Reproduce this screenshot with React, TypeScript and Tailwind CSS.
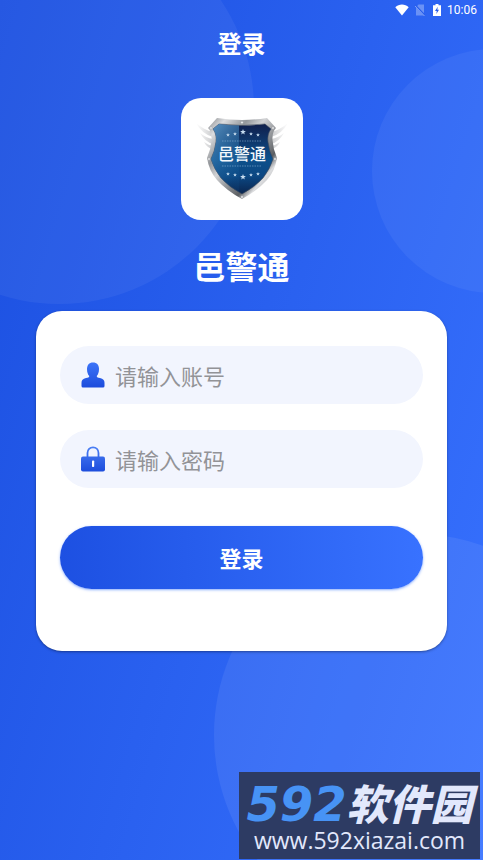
import { useState } from "react";

const STARS = [
  { x: 47, y: 17, s: 2 },
  { x: 54, y: 16, s: 2 },
  { x: 62, y: 14, s: 3 },
  { x: 70, y: 16, s: 2 },
  { x: 77, y: 17, s: 2 },
];

const STAR_POINTS = "0,-1 0.26,-0.34 0.95,-0.31 0.4,0.13 0.59,0.81 0,0.42 -0.59,0.81 -0.4,0.13 -0.95,-0.31 -0.26,-0.34";

const SHIELD_OUTER =
  "M36 0 Q61 4 86 0 L95 10 Q91 14 91.5 22 Q92 31 96 40 Q94 53 86 62 Q76 73 61 81 Q46 73 36 62 Q28 53 26 40 Q30 31 30.5 22 Q31 14 27 10 Z";
const SHIELD_INNER =
  "M38 6 Q61 9 84 6 L90 11 Q86 16 87 24 Q88 33 92 41 Q89 51 82 60 Q74 69 61 76 Q48 69 40 60 Q33 51 30 41 Q34 33 35 24 Q36 16 32 11 Z";

const WING = "M15 25 Q23 32 32 34 V39 Q21 36 15 25 Z M19 35 Q25 40 32 41 V46 Q24 44 19 35 Z M23 44 Q27 47 32 48 V51 Q26 50 23 44 Z";

function StatusBar() {
  return (
    <div className="flex h-5 items-center justify-end px-1.5 text-white">
      <svg className="h-3 w-3.5" viewBox="0 0 14 12" fill="currentColor">
        <path d="M0.3 3.2 C4 -0.3 10 -0.3 13.7 3.2 L7 11.6 Z" />
      </svg>
      <svg className="ml-1.5 h-3 w-2.5 opacity-40" viewBox="0 0 10 12">
        <path d="M3.5 0.5 H9 V11.5 H1 V3.5 Z" fill="currentColor" opacity="0.75" />
        <path d="M0 1 L10 11.5" stroke="#2459e8" strokeWidth="1.8" />
        <path d="M0 2 L9.5 12" stroke="currentColor" strokeWidth="1" />
      </svg>
      <svg className="ml-2 h-3 w-2" viewBox="0 0 8 12">
        <path d="M2.5 0 H5.5 V1.2 H8 V12 H0 V1.2 H2.5 Z" fill="currentColor" />
        <path d="M4.8 2.8 L2 7 H3.8 L3.3 10 L6 5.8 H4.3 Z" fill="#2459e8" />
      </svg>
      <span className="ml-1.5 font-[Roboto,sans-serif] text-xs">10:06</span>
    </div>
  );
}

function ShieldLogo() {
  return (
    <svg className="h-[122px] w-[122px]" viewBox="0 0 122 122" role="img" aria-label="邑警通">
      <defs>
        <linearGradient id="steel" x1="0" y1="0" x2="1" y2="1">
          <stop offset="0" stopColor="#7d8084" />
          <stop offset="0.14" stopColor="#dcdddf" />
          <stop offset="0.3" stopColor="#94979b" />
          <stop offset="0.42" stopColor="#d2d3d5" />
          <stop offset="0.55" stopColor="#96999d" />
          <stop offset="0.7" stopColor="#5c5f63" />
          <stop offset="0.78" stopColor="#dcdddf" />
          <stop offset="1" stopColor="#85888c" />
        </linearGradient>
        <linearGradient id="field" x1="0" y1="0" x2="0" y2="1">
          <stop offset="0" stopColor="#101f4c" />
          <stop offset="0.5" stopColor="#0d508b" />
          <stop offset="0.75" stopColor="#0c4782" />
          <stop offset="1" stopColor="#0a254f" />
        </linearGradient>
        <linearGradient id="shine" x1="0" y1="0" x2="0.4" y2="1">
          <stop offset="0" stopColor="#5f9bca" stopOpacity="0.95" />
          <stop offset="1" stopColor="#1664a3" stopOpacity="0.1" />
        </linearGradient>
        <linearGradient id="wing" x1="0" y1="0" x2="1" y2="0">
          <stop offset="0" stopColor="#ffffff" />
          <stop offset="1" stopColor="#cbccce" />
        </linearGradient>
        <clipPath id="fieldClip">
          <path d={SHIELD_INNER} />
        </clipPath>
      </defs>
      <g fill="url(#wing)">
        <path d={WING} />
        <path d={WING} transform="matrix(-1 0 0 1 122 0)" />
      </g>
      <g transform="translate(0 20)">
        <path d={SHIELD_OUTER} fill="url(#steel)" />
        <path d={SHIELD_INNER} fill="url(#field)" stroke="#3e4a5c" strokeWidth="0.6" />
        <path d="M30 6 H58 V76 H30 Z" fill="url(#shine)" clipPath="url(#fieldClip)" />
        <g fill="#c6dcef">
          {STARS.map((star) => (
            <g key={star.x}>
              <polygon points={STAR_POINTS} transform={`translate(${star.x} ${star.y}) scale(${star.s})`} />
              <polygon points={STAR_POINTS} transform={`translate(${star.x} ${73 - star.y}) scale(${star.s})`} />
            </g>
          ))}
        </g>
        <path d="M41 23 H81 M41 48 H81" stroke="#8ab4d6" strokeWidth="0.6" strokeDasharray="1.5 1" />
        <g fill="#f2f3f4" stroke="#8b8e93" strokeWidth="0.4">
          <circle cx="61" cy="4.5" r="1.2" />
          <circle cx="30" cy="10" r="1.2" />
          <circle cx="92" cy="10" r="1.2" />
          <circle cx="28" cy="41" r="1.2" />
          <circle cx="94" cy="41" r="1.2" />
          <circle cx="61" cy="79" r="1.2" />
        </g>
        <text
          x="61"
          y="42"
          textAnchor="middle"
          fill="#f4f8fc"
          className="font-['Noto_Sans_CJK_SC',sans-serif] text-[16px] font-medium"
        >
          邑警通
        </text>
      </g>
    </svg>
  );
}

function UserIcon() {
  return (
    <svg className="h-[26px] w-6 shrink-0" viewBox="0 0 24 26">
      <defs>
        <linearGradient id="userFill" x1="0" y1="0" x2="0" y2="1">
          <stop offset="0" stopColor="#3c74f8" />
          <stop offset="1" stopColor="#1c4cdc" />
        </linearGradient>
      </defs>
      <path
        d="M12 0.5 C8 0.5 6 3.2 6 7 C6 10.5 7 12.8 8.3 14 C8.3 15.4 7 15.7 5 16.1 C1.8 16.8 0.5 18.2 0.5 20.8 V24 Q0.5 25.5 2 25.5 H22 Q23.5 25.5 23.5 24 V20.8 C23.5 18.2 22.2 16.8 19 16.1 C17 15.7 15.7 15.4 15.7 14 C17 12.8 18 10.5 18 7 C18 3.2 16 0.5 12 0.5 Z"
        fill="url(#userFill)"
      />
    </svg>
  );
}

function LockIcon() {
  return (
    <svg className="h-[26px] w-6 shrink-0" viewBox="0 0 24 26">
      <defs>
        <linearGradient id="lockFill" gradientUnits="userSpaceOnUse" x1="0" y1="0" x2="0" y2="26">
          <stop offset="0" stopColor="#4c80f5" />
          <stop offset="1" stopColor="#1c4cdc" />
        </linearGradient>
      </defs>
      <path d="M6.5 12 V7 C6.5 3.4 8.9 1.3 12 1.3 C15.1 1.3 17.5 3.4 17.5 7 V12" fill="none" stroke="url(#lockFill)" strokeWidth="1.8" />
      <rect x="0" y="10.5" width="24" height="15" rx="2" fill="url(#lockFill)" />
      <rect x="11" y="14.5" width="2.2" height="6.5" rx="0.8" fill="#ffffff" />
    </svg>
  );
}

export default function App() {
  const [account, setAccount] = useState("");
  const [password, setPassword] = useState("");

  return (
    <div className="relative min-h-screen overflow-hidden bg-linear-[107deg] from-[#1b4fe0] to-[#3872ff] font-['Noto_Sans_CJK_SC',sans-serif]">
      {/* Background circles */}
      <div className="absolute -top-[86px] -left-[136px] h-[390px] w-[390px] rounded-full bg-white/5" />
      <div className="absolute top-[49px] -right-[133px] h-[244px] w-[244px] rounded-full bg-white/5" />
      <div className="absolute -right-[133px] -bottom-[76px] h-[402px] w-[402px] rounded-full bg-white/7" />

      <div className="relative">
        <StatusBar />

        <header className="flex h-[46px] items-center justify-center">
          <h1 className="text-2xl font-bold text-white">登录</h1>
        </header>

        <main className="px-9">
          <div className="flex flex-col items-center pt-8">
            <div className="rounded-[20px] bg-white">
              <ShieldLogo />
            </div>
            <h2 className="mt-[23px] text-[32px] leading-11 font-bold text-white">邑警通</h2>
          </div>

          <form
            className="mt-6 rounded-[26px] bg-white px-6 pt-[35px] pb-[62px] shadow-sm shadow-black/30"
            onSubmit={(e) => e.preventDefault()}
          >
            <label className="flex h-[58px] items-center gap-[10px] rounded-full bg-[#f2f5fe] px-[21px]">
              <UserIcon />
              <input
                type="text"
                aria-label="账号"
                placeholder="请输入账号"
                value={account}
                onChange={(e) => setAccount(e.target.value)}
                className="min-w-0 flex-1 bg-transparent text-[22px] text-gray-800 outline-none placeholder:text-[#929397]"
              />
            </label>

            <label className="mt-[26px] flex h-[58px] items-center gap-[10px] rounded-full bg-[#f2f5fe] px-[21px]">
              <LockIcon />
              <input
                type="password"
                aria-label="密码"
                placeholder="请输入密码"
                value={password}
                onChange={(e) => setPassword(e.target.value)}
                className="min-w-0 flex-1 bg-transparent text-[22px] text-gray-800 outline-none placeholder:text-[#929397]"
              />
            </label>

            <button
              type="submit"
              className="mt-[38px] h-[63px] w-full rounded-full bg-linear-to-r from-[#1d50e2] to-[#3872ff] text-[22px] font-bold text-white shadow-sm shadow-blue-600/40"
            >
              登录
            </button>
          </form>
        </main>
      </div>

      {/* Site badge */}
      <div className="absolute right-[3px] bottom-px flex h-[87px] w-[241px] flex-col items-center bg-[#2d3b63] pt-3 whitespace-nowrap">
        <div className="flex h-10 items-start italic">
          <span className="font-['DejaVu_Sans',sans-serif] text-5xl leading-10 font-bold text-[#4793f5]">592</span>
          <span className="text-[42px] leading-9 font-black text-[#e2e8fc]">软件园</span>
        </div>
        <div className="font-['Open_Sans',sans-serif] text-[23px] leading-8 font-medium text-[#e2e8fc]">www.592xiazai.com</div>
      </div>
    </div>
  );
}
